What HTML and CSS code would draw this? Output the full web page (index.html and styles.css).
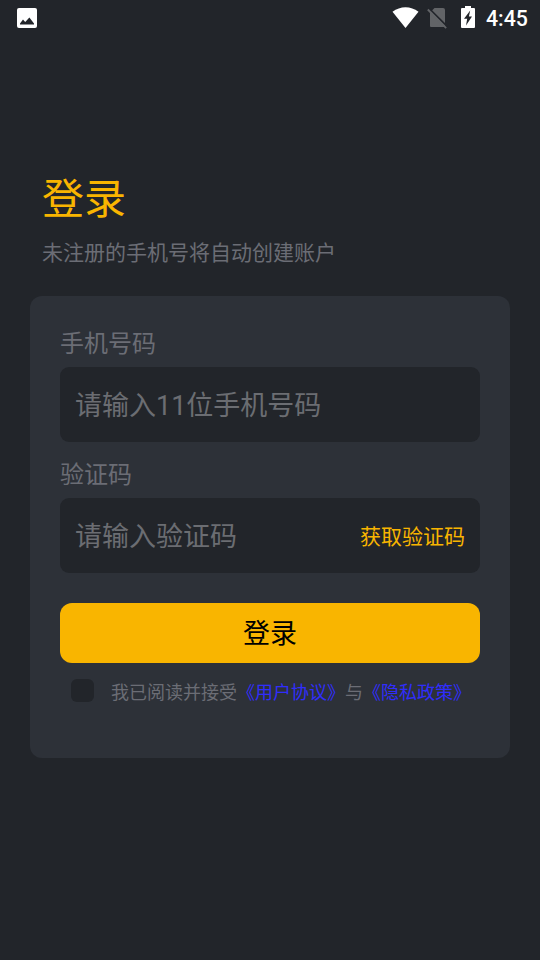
FILE: index.html
```html
<!DOCTYPE html>
<html lang="zh-CN">
<head>
<meta charset="utf-8">
<title>登录</title>
<link rel="stylesheet" href="styles.css">
</head>
<body>
<header class="status-bar">
  <svg class="icon-image" width="20" height="20" viewBox="0 0 20 20"><rect width="20" height="20" rx="2" fill="#fff"/><path d="M3 15.5 6 11.5 8.2 14 12.4 9.5 17 15.5V16.5H3Z" fill="#22252a"/></svg>
  <div class="status-right">
    <svg class="icon-wifi" width="27" height="22" viewBox="0 0 27 22"><path d="M0.5 4.8Q6.5 0.3 13.5 0.3T26.5 4.8L13.5 21Z" fill="#fff"/></svg>
    <svg class="icon-sim" width="21" height="22" viewBox="0 0 21 22"><path d="M7.5 0H16Q18 0 18 2V18Q18 19 17 19H4Q3 19 3 18V4.5Z" fill="#626467"/><path d="M1.8 .2 20.3 18.7" stroke="#22252a" stroke-width="1.8"/><path d="M.8 1.5 19.2 20.2" stroke="#626467" stroke-width="1.8"/></svg>
    <svg class="icon-battery" width="14" height="22" viewBox="0 0 14 22"><path d="M4 0H10V2H13Q14 2 14 3V21Q14 22 13 22H1Q0 22 0 21V3Q0 2 1 2H4Z" fill="#fff"/><path d="M9.2 4.6 3 12.7H6.2L5 19.4 11 10.4H7.9Z" fill="#22252a"/></svg>
    <span class="clock">4:45</span>
  </div>
</header>
<main class="page">
  <h1 class="title">登录</h1>
  <p class="subtitle">未注册的手机号将自动创建账户</p>
  <form class="card">
    <label class="label" for="phone">手机号码</label>
    <div class="field"><input id="phone" class="input" type="text" placeholder="请输入11位手机号码"></div>
    <label class="label" for="code">验证码</label>
    <div class="field"><input id="code" class="input" type="text" placeholder="请输入验证码"><span class="get-code">获取验证码</span></div>
    <button class="submit" type="button">登录</button>
    <div class="agreement">
      <span class="checkbox"></span>
      <span class="terms">我已阅读并接受<span class="link">《用户协议》</span>与<span class="link">《隐私政策》</span></span>
    </div>
  </form>
</main>
</body>
</html>
```

FILE: styles.css
```css
* {
  box-sizing: border-box;
}

body {
  margin: 0;
  min-height: 960px;
  background: #22252a;
  color: #6b6d75;
  font-family: Roboto, "Noto Sans CJK SC", sans-serif;
}

.status-bar {
  display: flex;
  justify-content: space-between;
  height: 36px;
  padding: 0 11px 0 17px;
}

.icon-image {
  margin-top: 8px;
}

.status-right {
  display: flex;
}

.icon-wifi {
  margin: 7px 8px 0 0;
}

.icon-sim {
  margin: 8px 13px 0 0;
}

.icon-battery {
  margin: 6px 11px 0 0;
}

.clock {
  width: 43px;
  color: #fff;
  font-size: 21.3px;
  font-weight: 500;
  line-height: 38px;
}

.page {
  padding: 134px 30px 0;
}

.title {
  margin: 0;
  padding-left: 12px;
  color: #f9b500;
  font-size: 42px;
  font-weight: 400;
  line-height: 60px;
}

.subtitle {
  margin: 8px 0 28px;
  padding-left: 12px;
  font-size: 21px;
  line-height: 30px;
}

.card {
  height: 462px;
  padding: 30px 30px 0;
  border-radius: 12px;
  background: #2d3138;
}

.label {
  display: block;
  height: 36px;
  margin-bottom: 5px;
  font-size: 24px;
  line-height: 36px;
}

.field {
  display: flex;
  align-items: center;
  height: 75px;
  padding: 2px 15px 0;
  border-radius: 9px;
  background: #22252a;
}

.field + .label {
  margin-top: 15px;
}

.input {
  flex: 1;
  min-width: 0;
  height: 73px;
  padding: 0;
  border: 0;
  outline: 0;
  background: transparent;
  color: #fff;
  font: inherit;
  font-size: 27px;
}

.input::placeholder {
  color: #6b6d72;
}

.get-code {
  color: #f9b500;
  font-size: 21px;
  line-height: 30px;
}

.submit {
  display: block;
  width: 100%;
  height: 60px;
  margin-top: 30px;
  padding: 2px 0 0;
  border: 0;
  border-radius: 12px;
  background: #f9b500;
  color: #000;
  font: inherit;
  font-size: 27px;
  line-height: 58px;
}

.agreement {
  display: flex;
  align-items: flex-start;
  gap: 17px;
  margin-top: 16px;
  padding-left: 11px;
}

.checkbox {
  width: 23px;
  height: 23px;
  border-radius: 6px;
  background: #22252a;
}

.terms {
  font-family: "Noto Sans CJK SC", sans-serif;
  font-size: 18px;
  line-height: 24px;
  white-space: nowrap;
}

.link {
  color: #302dfc;
}
```
